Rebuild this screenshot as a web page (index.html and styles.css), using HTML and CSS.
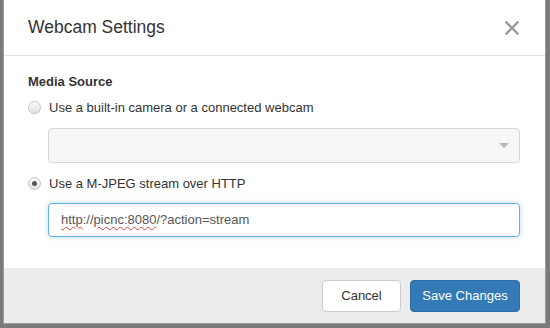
FILE: index.html
```html
<!DOCTYPE html>
<html lang="en">
  <head>
    <meta charset="UTF-8">
    <title>Webcam Settings</title>
    <link rel="stylesheet" href="styles.css">
  </head>
  <body>
    <div class="modal">
      <div class="modal-header">
        <h3>Webcam Settings</h3>
        <button type="button" class="close" aria-label="Close">
          <svg width="14" height="14" viewBox="0 0 14 14">
            <path d="M1.5 1.5 L12.5 12.5 M12.5 1.5 L1.5 12.5" stroke="#9a9a9a" stroke-width="2.4" stroke-linecap="square"/>
          </svg>
        </button>
      </div>
      <div class="modal-body">
        <div class="section-title">Media Source</div>
        <label class="radio">
          <span class="radio-dot"></span>
          Use a built-in camera or a connected webcam
        </label>
        <div class="select-box">
          <span class="caret"></span>
        </div>
        <label class="radio">
          <span class="radio-dot checked"></span>
          Use a M-JPEG stream over HTTP
        </label>
        <div class="text-input"><span class="typo">http</span>://<span class="typo">picnc:8080</span>/?action=stream</div>
      </div>
      <div class="modal-footer">
        <button type="button" class="btn btn-default">Cancel</button>
        <button type="button" class="btn btn-primary">Save Changes</button>
      </div>
    </div>
  </body>
</html>
```

FILE: styles.css
```css
body {
  margin: 0;
  background: #7b7b7b;
  font-family: "Liberation Sans", Arial, sans-serif;
  font-size: 13px;
  color: #333;
  overflow: hidden;
}

.modal {
  margin-left: 3px;
  width: 541px;
  height: 323px;
  background: white;
  border: 1px solid #9a9a9a;
  border-top: none;
  display: flex;
  flex-direction: column;
}

.modal-header {
  height: 55px;
  border-bottom: 1px solid #e0e0e0;
  display: flex;
  align-items: center;
  justify-content: space-between;
  padding: 0 24px;
}

.modal-header h3 {
  margin: 0;
  font-size: 17.5px;
  font-weight: normal;
  color: #333;
}

.close {
  background: none;
  border: none;
  padding: 0;
  margin-right: 2px;
  display: flex;
}

.modal-body {
  flex: 1;
  padding: 17px 25px 0 24px;
}

.section-title {
  font-weight: bold;
  height: 18px;
  line-height: 18px;
}

.radio {
  display: flex;
  align-items: center;
  height: 18px;
  margin-top: 7px;
}

.radio-dot {
  width: 11px;
  height: 11px;
  border: 1px solid #c2c2c2;
  border-radius: 50%;
  background: linear-gradient(#fcfcfc, #e2e2e2);
  margin-right: 8px;
  position: relative;
}

.radio-dot.checked::after {
  content: "";
  position: absolute;
  left: 3px;
  top: 3px;
  width: 5px;
  height: 5px;
  border-radius: 50%;
  background: #555;
}

.select-box {
  margin: 12px 0 0 20px;
  height: 33px;
  background: #f7f7f7;
  border: 1px solid #d8d8d8;
  border-radius: 4px;
  display: flex;
  align-items: center;
  justify-content: flex-end;
  padding-right: 10px;
}

.caret {
  width: 0;
  height: 0;
  border-left: 5px solid transparent;
  border-right: 5px solid transparent;
  border-top: 5px solid #b8b8b8;
}

.select-box + .radio {
  margin-top: 11px;
}

.text-input {
  margin: 11px 0 0 20px;
  height: 32px;
  line-height: 32px;
  border: 1px solid #66afe9;
  border-radius: 4px;
  box-shadow: 0 0 5px rgba(102, 175, 233, 0.5);
  padding-left: 12px;
  color: #555;
}

.typo {
  text-decoration: underline wavy #e04040;
  text-decoration-thickness: 1px;
  text-underline-offset: 2px;
}

.modal-footer {
  height: 55px;
  background: #ececec;
  display: flex;
  align-items: center;
  justify-content: flex-end;
  gap: 9px;
  padding: 0 25px;
}

.btn {
  font-family: "Liberation Sans", Arial, sans-serif;
  font-size: 13px;
  height: 32px;
  border-radius: 4px;
  padding: 0;
  white-space: nowrap;
}

.btn-default {
  width: 79px;
  background: white;
  border: 1px solid #ccc;
  color: #333;
}

.btn-primary {
  width: 110px;
  background: #337ab7;
  border: 1px solid #2e6da4;
  color: white;
}
```
